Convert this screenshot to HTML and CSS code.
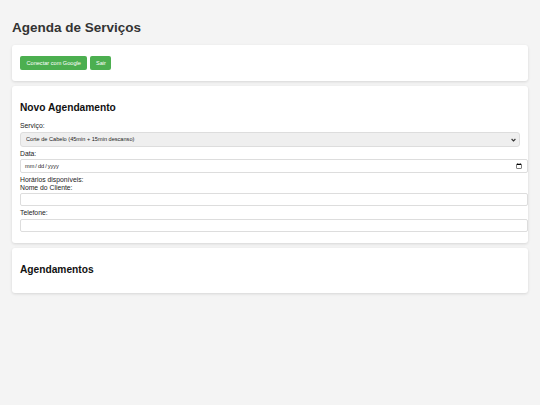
FILE: index.html
```html
<!DOCTYPE html>
<html lang="pt-BR">
<head>
<meta charset="utf-8">
<title>Agenda de Serviços</title>
<link rel="stylesheet" href="styles.css">
</head>
<body>
<h1 class="title">Agenda de Serviços</h1>
<div class="card card-auth">
  <button class="btn btn-google">Conectar com Google</button>
  <button class="btn btn-exit">Sair</button>
</div>
<div class="card">
  <h2 class="card-title">Novo Agendamento</h2>
  <label class="label">Serviço:</label>
  <div class="select-wrap">
    <select class="select">
      <option>Corte de Cabelo (45min + 15min descanso)</option>
    </select>
    <svg class="select-arrow" width="5" height="4" viewBox="0 0 5 4"><path d="M0.6 1 L2.5 3 L4.4 1" fill="none" stroke="#333" stroke-width="1.1"/></svg>
  </div>
  <label class="label">Data:</label>
  <input class="input input-date" type="date">
  <label class="label">Horários disponíveis:</label>
  <label class="label">Nome do Cliente:</label>
  <input class="input" type="text">
  <label class="label">Telefone:</label>
  <input class="input" type="text">
</div>
<div class="card card-list">
  <h2 class="card-title">Agendamentos</h2>
</div>
</body>
</html>
```
FILE: styles.css
```css
html, body {
  margin: 0;
  padding: 0;
}
body {
  background: #f4f4f4;
  font-family: "Liberation Sans", Arial, sans-serif;
  color: #222;
  padding: 12px;
}
.title {
  font-size: 13.5px;
  font-weight: bold;
  color: #333;
  margin: 8px 0 9px;
  line-height: 15.5px;
}
.card {
  background: #fff;
  border-radius: 3px;
  box-shadow: 0 1px 3px rgba(0,0,0,0.12);
  padding: 8px;
  margin-bottom: 5px;
}
.card-auth {
  display: flex;
  gap: 3px;
  padding: 11px 8px;
}
.card-list {
  padding-bottom: 9px;
}
.btn {
  background: #4caf50;
  color: #fff;
  border: none;
  border-radius: 2px;
  font-family: "Liberation Sans", Arial, sans-serif;
  font-size: 5.6px;
  height: 14px;
  padding: 0 6.5px;
}
.btn-exit {
  padding: 0 5.5px;
}
.card-title {
  font-size: 10.2px;
  font-weight: bold;
  color: #111;
  margin: 8px 0 8.5px;
  line-height: 12px;
}
.label {
  display: block;
  font-size: 6.8px;
  line-height: 7.5px;
  color: #222;
  margin: 0;
}
.select-wrap {
  position: relative;
  margin: 2px 0 3px;
}
.select {
  display: block;
  width: 100%;
  height: 15px;
  -webkit-appearance: none;
  appearance: none;
  background: #efefef;
  border: 1px solid #ddd;
  border-radius: 3px;
  font-family: "Liberation Sans", Arial, sans-serif;
  font-size: 5.6px;
  color: #222;
  padding: 0 5px;
  margin: 0;
}
.select-arrow {
  position: absolute;
  right: 4px;
  top: 6px;
}
.input {
  display: block;
  width: 100%;
  box-sizing: content-box;
  height: 11px;
  padding: 0 3px;
  border: 1px solid #ddd;
  border-radius: 2px;
  font-family: "Liberation Sans", Arial, sans-serif;
  font-size: 5.6px;
  color: #222;
  margin: 2px 0 3px;
}
.input-date {
  height: 12px;
}
```
